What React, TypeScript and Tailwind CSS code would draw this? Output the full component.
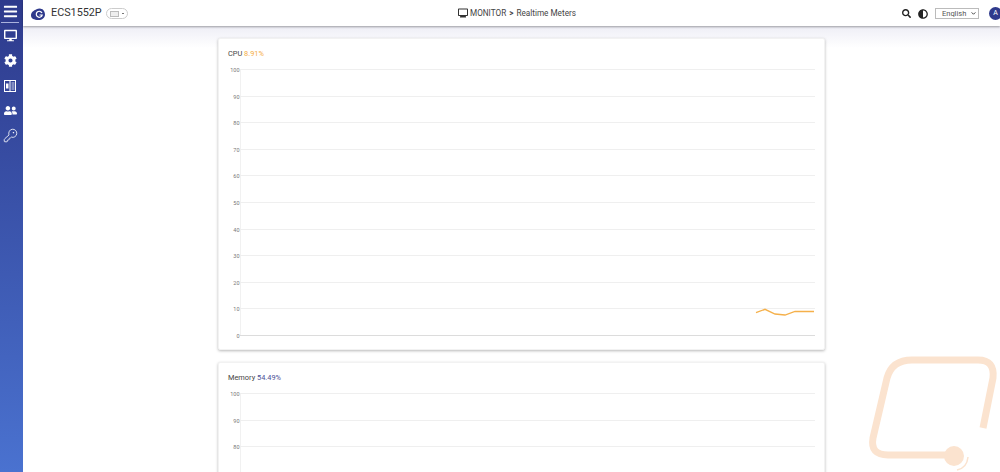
import { FaBars, FaCog, FaDesktop, FaSearch, FaUserFriends, FaAdjust } from "react-icons/fa"
import { MdOutlineMonitor } from "react-icons/md"
import { KeyRound } from "lucide-react"

const FONT = { fontFamily: "Roboto, sans-serif" }
const TICKS = [100, 90, 80, 70, 60, 50, 40, 30, 20, 10, 0]

function Chart({ line }: { line?: string }) {
  return (
    <svg width="605" height="284" className="block">
      <line x1="21.5" x2="21.5" y1="4" y2="270" stroke="#f1f1f1" />
      {TICKS.map((t, i) => {
        const y = 4 + Math.round(i * 26.6) + 0.5
        return (
          <g key={t}>
            <line x1="21" x2="596" y1={y} y2={y} stroke={t === 0 ? "#dcdcdc" : "#efefef"} />
            <text x="20.5" y={y + 2} textAnchor="end" fontSize="5.5" fill="#777" style={FONT}>{t}</text>
          </g>
        )
      })}
      {line && <polyline points={line} fill="none" stroke="#f5b04a" strokeWidth="1.3" />}
    </svg>
  )
}

function Card({ label, value, color, line }: { label: string; value: string; color: string; line?: string }) {
  return (
    <div className="w-[607px] h-[312px] shrink-0 bg-white rounded-[2px] border border-[#f2f2f2] shadow-[0_1px_3px_rgba(0,0,0,0.28)] pt-[10px]">
      <div className="pl-[9px] h-[16px] text-[7.400px] leading-[10px] text-[#444]">
        {label} <span className={color}>{value}</span>
      </div>
      <Chart line={line} />
    </div>
  )
}

export default function App() {
  return (
    <div className="relative flex h-screen w-full overflow-hidden bg-white" style={FONT}>
      <aside className="w-[23px] shrink-0 flex flex-col items-stretch pr-[3px] bg-gradient-to-b from-[#2e3a8c] to-[#4a72d0] text-white">
        <div className="h-[23px] flex items-center justify-center">
          <FaBars className="text-[15px]" />
        </div>
        <div className="mx-auto w-[18px] h-px -mt-px bg-[#aab2dd]" />
        <div className="h-[25px] flex items-center justify-center">
          <FaDesktop className="text-[13px]" />
        </div>
        <div className="h-[25px] flex items-center justify-center">
          <FaCog className="text-[13px]" />
        </div>
        <div className="h-[25px] flex items-center justify-center">
          <svg viewBox="0 0 12 12" className="w-[12px] h-[12px]" fill="none" stroke="white">
            <rect x="0.5" y="0.5" width="11" height="11" strokeWidth="1" />
            <line x1="6" x2="6" y1="1" y2="11" strokeWidth="1" />
            <rect x="2" y="3.500" width="2.500" height="5" fill="white" strokeWidth="0" />
            <path d="M7.500 3h3M7.500 5h3M7.500 7h3M7.500 9h3" strokeWidth="0.8" />
          </svg>
        </div>
        <div className="h-[25px] flex items-center justify-center">
          <FaUserFriends className="text-[13px]" />
        </div>
        <div className="h-[25px] flex items-center justify-center">
          <KeyRound size={15} strokeWidth={1.3} />
        </div>
      </aside>

      <div className="flex-1 flex flex-col min-w-0">
        <header className="relative z-10 h-[26px] shrink-0 flex items-center pt-px bg-white shadow-[0_1px_2px_rgba(0,0,0,0.35)]">
          <svg viewBox="0 0 14 12" className="ml-[8px] w-[14px] h-[12px]">
            <path d="M0 7.500C0 4 3 2.500 5 1.500 7 .5 9.500 0 10.500 1c1.500 0 3.500 2.500 3.500 5.500 0 3.500-3 5.500-6.500 5.500C3 12 0 10.500 0 7.500z" fill="#2f3a8c" />
            <path d="M11 5a3 3 0 1 0 .2 2H8.500" fill="none" stroke="white" strokeWidth="1.200" />
          </svg>
          <span className="ml-[6px] text-[10.800px] text-[#333]">ECS1552P</span>
          <div className="ml-[4px] w-[22px] h-[11px] rounded-full border border-[#ccc] flex items-center pl-[3px] gap-[3px]">
            <div className="w-[9px] h-[6px] border border-[#bbb] bg-[#eee]" />
            <div className="w-[2px] h-px bg-[#777]" />
          </div>
          <div className="absolute left-[434px] flex items-center text-[8.200px] text-[#444]">
            <MdOutlineMonitor className="text-[12px] text-[#333]" />
            <span className="ml-[1px]">MONITOR</span>
            <span className="mx-[3px] font-bold">&gt;</span>
            <span>Realtime Meters</span>
          </div>
          <div className="ml-auto flex items-center">
            <FaSearch className="text-[9px] text-[#222]" />
            <FaAdjust className="ml-[7px] text-[10px] text-[#222]" />
            <div className="relative ml-[7px]">
              <select className="block w-[44px] h-[11px] appearance-none pl-[6px] text-[7.500px] leading-none text-[#555] border border-[#bbb] bg-white" defaultValue="English">
                <option>English</option>
              </select>
              <svg viewBox="0 0 6 4" className="absolute right-[3px] top-[4px] w-[5px] h-[3px]" fill="none" stroke="#333" strokeWidth="1.200">
                <path d="M0.500 0.500L3 3l2.500-2.500" />
              </svg>
            </div>
            <div className="ml-[10px] -mr-[2px] w-[13px] h-[13px] rounded-full bg-[#2f3a8c] text-white text-[7px] flex items-center justify-center">A</div>
          </div>
        </header>

        <main className="flex-1 min-h-0 overflow-hidden bg-gradient-to-b from-[#eeeef6] to-white to-[22px] pl-[195px] pt-[12px] flex flex-col gap-[12px]">
          <Card
            label="CPU"
            value="8.91%"
            color="text-[#f5ac3f]"
            line="537,247.700 546,244.300 556,249 566,250 576,246.500 595,246.500"
          />
          <Card label="Memory" value="54.49%" color="text-[#4a4f96]" />
        </main>
      </div>

      <svg className="absolute left-0 top-0 pointer-events-none" width="1000" height="472" fill="none">
        <path
          d="M983 428 L993 378 Q995 360 978 360 L912 360 Q892 360 887 378 L873 438 Q870 455 888 455 L953 455"
          stroke="#fbe3cf"
          strokeWidth="7"
        />
        <circle cx="954" cy="456" r="10" fill="#fbe3cf" />
        <path d="M957 470 Q967 468 968 457" stroke="#fbe3cf" strokeWidth="1.500" />
      </svg>
    </div>
  )
}
